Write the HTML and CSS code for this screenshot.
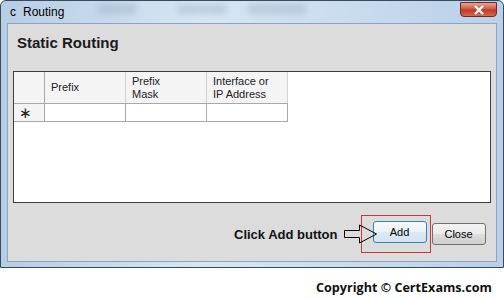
FILE: index.html
```html
<!DOCTYPE html>
<html>
<head>
  <title>Routing</title>
  <link rel="stylesheet" href="styles.css">
</head>
<body>
  <div class="window">
    <div class="titlebar">
      <span class="app-icon">c</span>
      <span class="title">Routing</span>
      <span class="blur blur-1"></span>
      <span class="blur blur-2"></span>
      <span class="blur blur-3"></span>
      <div class="close-btn">
        <svg width="14" height="10" viewBox="0 0 14 10">
          <path d="M3 1 L11 9 M11 1 L3 9" stroke="#fff" stroke-width="2.4" fill="none"/>
        </svg>
      </div>
    </div>

    <div class="client">
      <h1>Static Routing</h1>

      <div class="grid">
        <table>
          <tr class="head">
            <th class="row-head"></th>
            <th>Prefix</th>
            <th>Prefix<br>Mask</th>
            <th>Interface or<br>IP Address</th>
          </tr>
          <tr class="new-row">
            <td class="row-head">&lowast;</td>
            <td></td>
            <td></td>
            <td></td>
          </tr>
        </table>
      </div>

      <div class="actions">
        <span class="hint">Click Add button</span>
        <svg class="arrow" width="34" height="20" viewBox="0 0 34 20">
          <path d="M0.5 6.5 H15.5 V1 L32.5 10 L15.5 19 V13.5 H0.5 Z" fill="none" stroke="#000" stroke-width="1"/>
        </svg>
        <div class="highlight">
          <button class="btn btn-default">Add</button>
        </div>
        <button class="btn">Close</button>
      </div>
    </div>
  </div>

  <div class="copyright">Copyright &copy; CertExams.com</div>
</body>
</html>
```

FILE: styles.css
```css
body {
  margin: 0;
  background-color: white;
  font-family: "Liberation Sans", Arial, sans-serif;
}

.window {
  width: 490px;
  height: 261px;
  border: 1px solid #3a4a5a;
  border-radius: 6px 6px 0 0;
  background: linear-gradient(to right, #b7cde4, #d6e6f5 40%, #c9dcee 70%, #b9d0e8);
  display: flex;
  flex-direction: column;
  padding: 0 6px 5px 6px;
}

.titlebar {
  height: 22px;
  display: flex;
  align-items: center;
  position: relative;
  font-size: 12px;
  color: #000;
}

.app-icon {
  margin-left: 3px;
  width: 13px;
}

.blur {
  position: absolute;
  top: 3px;
  height: 10px;
  background: rgba(120, 140, 160, 0.25);
  border-radius: 5px;
  filter: blur(3px);
}

.blur-1 { left: 90px; width: 40px; }
.blur-2 { left: 170px; width: 50px; }
.blur-3 { left: 240px; width: 60px; }

.close-btn {
  position: absolute;
  right: 0;
  top: 1px;
  width: 37px;
  height: 15px;
  border: 1px solid #6b2a20;
  border-radius: 0 0 4px 4px;
  background: linear-gradient(#e8a593, #d2583f 45%, #c0392b 55%, #d66a50);
  display: flex;
  align-items: center;
  justify-content: center;
  box-sizing: border-box;
}

.client {
  flex: 1;
  background-color: #dcdcdc;
  border: 1px solid #8ea4bc;
  padding: 0 5px;
  display: flex;
  flex-direction: column;
}

h1 {
  margin: 9px 0 0 4px;
  font-size: 15px;
  line-height: 20px;
  font-weight: bold;
  color: #1a1a1a;
}

.grid {
  margin-top: 18px;
  height: 130px;
  border: 1px solid #3c3c3c;
  background-color: #fff;
}

table {
  border-collapse: collapse;
  font-size: 11px;
  color: #222;
}

th {
  height: 31px;
  width: 74px;
  padding: 0 0 0 6px;
  text-align: left;
  font-weight: normal;
  line-height: 13px;
  background-color: #f4f4f4;
  border-right: 1px solid #d4d4d4;
  border-bottom: 1px solid #a8a8a8;
  vertical-align: middle;
}

td {
  height: 17px;
  padding: 0;
  border-right: 1px solid #a8a8a8;
  border-bottom: 1px solid #a8a8a8;
}

th.row-head {
  width: 30px;
  padding: 0;
  border-right: 1px solid #a8a8a8;
}

td.row-head {
  background-color: #f4f4f4;
  padding-left: 5px;
  font-size: 15px;
  line-height: 14px;
}

.actions {
  margin-top: 12px;
  display: flex;
  align-items: center;
}

.hint {
  margin-left: 221px;
  font-size: 13px;
  font-weight: bold;
  color: #111;
}

.arrow {
  margin-left: 6px;
  margin-right: -17px;
  position: relative;
  z-index: 1;
}

.highlight {
  border: 1px solid #c43a3a;
  padding: 5px 3px 9px 11px;
}

.btn {
  width: 54px;
  height: 22px;
  font-family: "Liberation Sans", Arial, sans-serif;
  font-size: 11px;
  color: #000;
  border: 1px solid #707070;
  border-radius: 3px;
  background: linear-gradient(#f2f2f2, #ebebeb 50%, #dddddd 51%, #cfcfcf);
  margin-left: 1px;
}

.btn-default {
  border-color: #3c7fb1;
  background: linear-gradient(#f4f9fc, #eaf3f9 50%, #dceaf4 51%, #d2e4f0);
  margin-left: 0;
}

.copyright {
  margin: 11px 0 0 316px;
  font-family: "Open Sans", sans-serif;
  font-size: 12.6px;
  font-weight: bold;
  color: #111;
}
```
